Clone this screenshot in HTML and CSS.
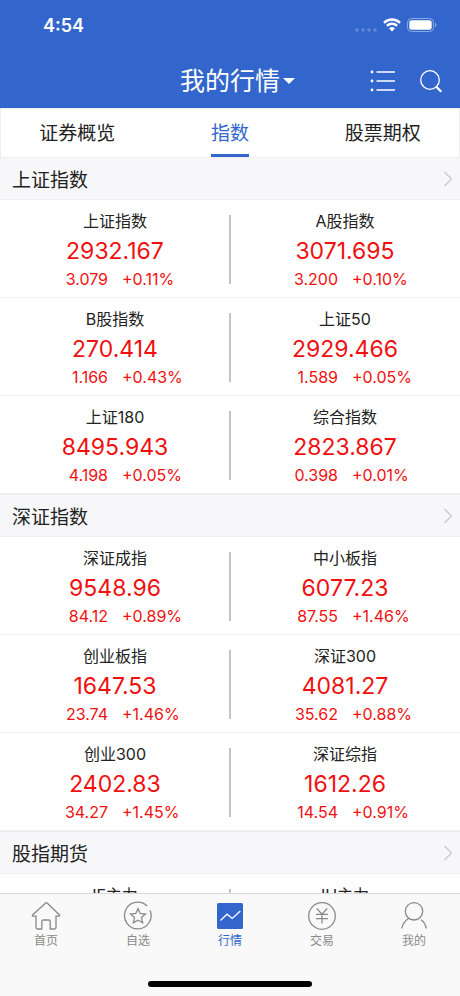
FILE: index.html
```html
<!DOCTYPE html>
<html lang="zh-CN">
  <head>
    <meta charset="utf-8">
    <meta name="viewport" content="width=device-width, initial-scale=1">
    <title>我的行情</title>
    <link rel="stylesheet" href="styles.css">
  </head>
  <body>
    <header class="header">
      <div class="status">
        <span class="time">4:54</span>
        <svg class="signal" width="22" height="4" viewBox="0 0 22 4">
          <circle cx="2" cy="2" r="1.8"/>
          <circle cx="8" cy="2" r="1.8"/>
          <circle cx="14" cy="2" r="1.8"/>
          <circle cx="20" cy="2" r="1.8"/>
        </svg>
        <svg class="wifi" width="18" height="14" viewBox="0 0 18 14">
          <path d="M1 4.8a11.4 11.4 0 0 1 16 0" stroke-width="2.5"/>
          <path d="M3.9 7.9a7.3 7.3 0 0 1 10.2 0" stroke-width="2.4"/>
          <path class="dot" d="M6.1 10.5a4.2 4.2 0 0 1 5.8 0L9 13.4z"/>
        </svg>
        <svg class="battery" width="30" height="14" viewBox="0 0 30 14">
          <rect class="case" x=".5" y=".5" width="26" height="13" rx="4"/>
          <rect class="charge" x="2.3" y="2.2" width="22.4" height="9.6" rx="2.3"/>
          <path class="tip" d="M28 4.8c1.9.7 1.9 3.7 0 4.4z"/>
        </svg>
      </div>
      <div class="bar">
        <button class="title" type="button">我的行情<span class="caret"></span></button>
        <div class="actions">
          <button type="button" aria-label="列表">
            <svg width="26" height="24" viewBox="0 0 26 24">
              <path d="M6.500 3h18.500M6.500 12h18.500M6.500 21h18.500"/>
              <circle cx="2" cy="3" r="1.4"/>
              <circle cx="2" cy="12" r="1.4"/>
              <circle cx="2" cy="21" r="1.4"/>
            </svg>
          </button>
          <button type="button" aria-label="搜索">
            <svg width="24" height="24" viewBox="0 0 24 24">
              <circle class="lens" cx="11" cy="11" r="9.3"/>
              <path d="M17.300 17.700l5 5" stroke-width="2.2"/>
            </svg>
          </button>
        </div>
      </div>
    </header>

    <nav class="tabs">
      <a href="#overview">证券概览</a>
      <a href="#index" class="active">指数</a>
      <a href="#options">股票期权</a>
    </nav>

    <main class="quotes">
      <a class="group" href="#sh">上证指数
        <svg width="10" height="16" viewBox="0 0 10 16"><path d="M1.500 1l7 7-7 7"/></svg>
      </a>
      <div class="row">
        <div class="quote">
          <h3>上证指数</h3>
          <strong>2932.167</strong>
          <p><span>3.079</span><span>+0.11%</span></p>
        </div>
        <div class="quote">
          <h3>A股指数</h3>
          <strong>3071.695</strong>
          <p><span>3.200</span><span>+0.10%</span></p>
        </div>
      </div>
      <div class="row">
        <div class="quote">
          <h3>B股指数</h3>
          <strong>270.414</strong>
          <p><span>1.166</span><span>+0.43%</span></p>
        </div>
        <div class="quote">
          <h3>上证50</h3>
          <strong>2929.466</strong>
          <p><span>1.589</span><span>+0.05%</span></p>
        </div>
      </div>
      <div class="row">
        <div class="quote">
          <h3>上证180</h3>
          <strong>8495.943</strong>
          <p><span>4.198</span><span>+0.05%</span></p>
        </div>
        <div class="quote">
          <h3>综合指数</h3>
          <strong>2823.867</strong>
          <p><span>0.398</span><span>+0.01%</span></p>
        </div>
      </div>

      <a class="group" href="#sz">深证指数
        <svg width="10" height="16" viewBox="0 0 10 16"><path d="M1.500 1l7 7-7 7"/></svg>
      </a>
      <div class="row">
        <div class="quote">
          <h3>深证成指</h3>
          <strong>9548.96</strong>
          <p><span>84.12</span><span>+0.89%</span></p>
        </div>
        <div class="quote">
          <h3>中小板指</h3>
          <strong>6077.23</strong>
          <p><span>87.55</span><span>+1.46%</span></p>
        </div>
      </div>
      <div class="row">
        <div class="quote">
          <h3>创业板指</h3>
          <strong>1647.53</strong>
          <p><span>23.74</span><span>+1.46%</span></p>
        </div>
        <div class="quote">
          <h3>深证300</h3>
          <strong>4081.27</strong>
          <p><span>35.62</span><span>+0.88%</span></p>
        </div>
      </div>
      <div class="row">
        <div class="quote">
          <h3>创业300</h3>
          <strong>2402.83</strong>
          <p><span>34.27</span><span>+1.45%</span></p>
        </div>
        <div class="quote">
          <h3>深证综指</h3>
          <strong>1612.26</strong>
          <p><span>14.54</span><span>+0.91%</span></p>
        </div>
      </div>

      <a class="group" href="#futures">股指期货
        <svg width="10" height="16" viewBox="0 0 10 16"><path d="M1.500 1l7 7-7 7"/></svg>
      </a>
      <div class="row">
        <div class="quote"><h3>IF主力</h3></div>
        <div class="quote"><h3>IH主力</h3></div>
      </div>
    </main>

    <footer class="footer">
      <nav class="menu">
        <a href="#home">
          <svg width="30" height="30" viewBox="0 0 30 30">
            <path d="M15 1.800L1.500 14q-.6 1.200.8 1.200H5v11.300q0 1.500 1.500 1.500h4.300v-7.500q0-1.500 1.500-1.500h5.400q1.500 0 1.500 1.500V28h4.300q1.500 0 1.500-1.500V15.200h2.700q1.400 0 .8-1.200L16.400 2.200Q15.600 1.300 15 1.800z"/>
          </svg>
          首页
        </a>
        <a href="#favorites">
          <svg width="30" height="30" viewBox="0 0 30 30">
            <path d="M24.200 5.100A13.300 13.300 0 1 0 27 9.200M21.800 3.500l1 .6"/>
            <path d="M15 7.500l2.200 4.900 5.300.6-4 3.600 1.100 5.200-4.600-2.600-4.600 2.600 1.100-5.200-4-3.600 5.300-.6z"/>
          </svg>
          自选
        </a>
        <a href="#market" class="active">
          <svg width="30" height="30" viewBox="0 0 30 30">
            <rect x="2" y="2" width="26" height="26" rx="1.500"/>
            <path d="M5.500 19.500l6.500-6.300 5.300 4.300 8-7.500"/>
          </svg>
          行情
        </a>
        <a href="#trade">
          <svg width="30" height="30" viewBox="0 0 30 30">
            <circle cx="15" cy="15" r="13.300"/>
            <path d="M9.800 7.500l5.200 5.800 5.200-5.800M9 13.300h12M9 17.600h12M15 13.300v9.200"/>
          </svg>
          交易
        </a>
        <a href="#mine">
          <svg width="30" height="30" viewBox="0 0 30 30">
            <circle cx="15" cy="10.300" r="8.700"/>
            <path d="M2.800 27.500q1-6.300 7-10.300M27.200 27.500q-.8-5.500-5-8.700"/>
          </svg>
          我的
        </a>
      </nav>
      <div class="home-indicator"></div>
    </footer>
  </body>
</html>
```

FILE: styles.css
```css
:root {
  --blue: #3366cc;
  --red: #f01010;
  --line: #eeeef0;
  --grey: #8a8a8a;
}
* {
  box-sizing: border-box;
}
body {
  margin: 0;
  height: 100vh;
  display: flex;
  flex-direction: column;
  background: #fff;
  color: #222;
  font-family: Inter, "Noto Sans CJK SC", sans-serif;
}
a {
  color: inherit;
  text-decoration: none;
}
button {
  padding: 0;
  border: 0;
  background: none;
  color: inherit;
  font: inherit;
}
svg {
  display: block;
  fill: none;
}

/* header */
.header {
  background: var(--blue);
  color: #fff;
}
.status {
  display: flex;
  align-items: center;
  height: 50px;
  padding: 0 23px 0 43px;
}
.time {
  margin-right: auto;
  font-size: 18px;
  font-weight: 600;
}
.signal {
  margin: 10px 6px 0 0;
  fill: #6288d9;
}
.wifi {
  margin-right: 6px;
  stroke: #fff;
}
.wifi .dot {
  fill: #fff;
  stroke: none;
}
.battery .case {
  stroke: #8aa8e2;
}
.battery .charge {
  fill: #fff;
}
.battery .tip {
  fill: #8aa8e2;
}
.bar {
  display: grid;
  grid-template-columns: 1fr auto 1fr;
  align-items: center;
  height: 58px;
  padding: 4px 17px 0;
}
.title {
  position: relative;
  grid-column: 2;
  font-size: 25px;
  line-height: 36px;
}
.caret {
  position: absolute;
  top: 15px;
  left: 100%;
  margin-left: 3px;
  border: 6px solid transparent;
  border-top-color: #fff;
  border-bottom: 0;
}
.actions {
  display: flex;
  justify-content: flex-end;
  gap: 23px;
}
.actions svg {
  stroke: #fff;
  stroke-width: 1.3;
}
.actions circle {
  fill: #fff;
  stroke: none;
}
.actions .lens {
  fill: none;
  stroke: #fff;
}

/* tabs */
.tabs {
  display: flex;
  justify-content: space-around;
  height: 49px;
  border: 1px solid var(--line);
  border-bottom: 0;
  font-size: 19px;
  line-height: 50px;
}
.tabs a {
  flex: 1;
  display: flex;
  justify-content: center;
  height: 48px;
}
.tabs .active {
  color: var(--blue);
}
.tabs .active::after {
  content: "";
  align-self: flex-end;
  width: 38px;
  height: 3px;
  margin-left: -38px;
  background: var(--blue);
}

/* quotes */
.quotes {
  flex: 1;
  min-height: 0;
  overflow: hidden;
}
.group {
  display: flex;
  align-items: center;
  justify-content: space-between;
  height: 43px;
  padding: 0 7px 0 12px;
  border: 1px solid var(--line);
  border-width: 1px 0;
  background: #f7f7f9;
  font-size: 19px;
}
.group svg {
  stroke: #c8c8cc;
  stroke-width: 1.2;
}
.row {
  position: relative;
  display: flex;
  min-height: 98px;
  border-bottom: 1px solid var(--line);
}
.row::after {
  content: "";
  position: absolute;
  top: 15px;
  bottom: 13px;
  left: 50%;
  width: 2px;
  margin-left: -1px;
  background: #c4c4c4;
}
.quote {
  flex: 1;
  display: flex;
  flex-direction: column;
  align-items: center;
  padding-top: 8px;
}
.quote h3 {
  margin: 0;
  font-size: 16px;
  font-weight: 400;
  line-height: 26px;
}
.quote strong {
  color: var(--red);
  font-size: 23px;
  font-weight: 400;
  line-height: 34px;
}
.quote p {
  display: grid;
  grid-template-columns: 1fr 1fr;
  gap: 14px;
  width: 100%;
  margin: 0;
  color: var(--red);
  font-size: 16px;
  line-height: 22px;
}
.quote p span:first-child {
  text-align: right;
}

/* footer */
.footer {
  padding-bottom: 9px;
  border-top: 1px solid #d8d8d8;
  background: #f9f9f9;
}
.menu {
  display: flex;
  height: 87px;
  padding-top: 7px;
}
.menu a {
  flex: 1;
  display: flex;
  flex-direction: column;
  align-items: center;
  color: var(--grey);
  font-size: 12px;
  line-height: 20px;
}
.menu svg {
  stroke: var(--grey);
  stroke-width: 1.3;
}
.menu .active {
  color: var(--blue);
}
.menu .active rect {
  fill: var(--blue);
  stroke: none;
}
.menu .active path {
  stroke: #fff;
}
.home-indicator {
  width: 164px;
  height: 6px;
  margin: 0 auto;
  border-radius: 3px;
  background: #000;
}
```
